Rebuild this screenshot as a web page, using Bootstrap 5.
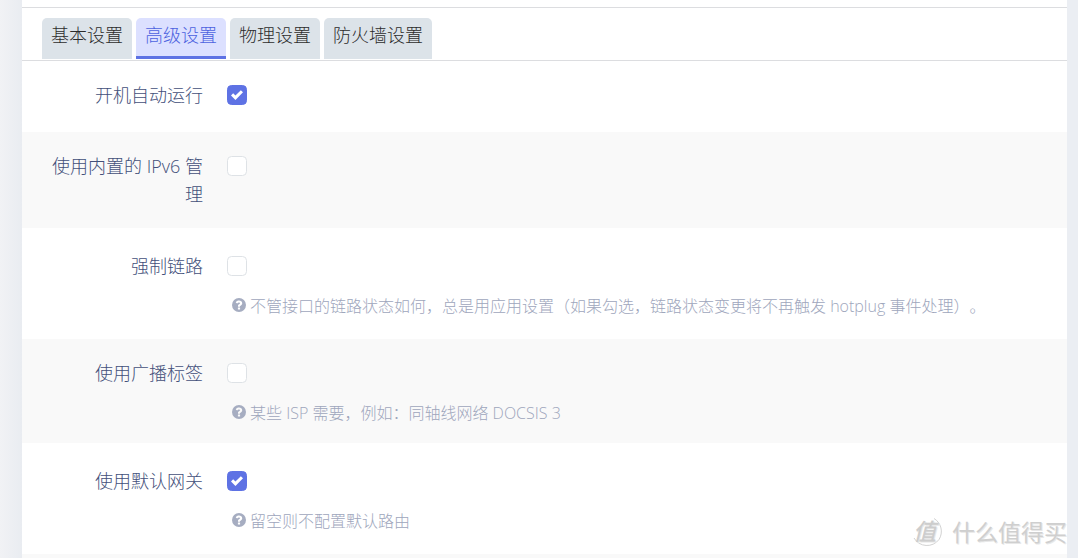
<!DOCTYPE html>
<html lang="zh-CN">
<head>
<meta charset="utf-8">
<meta name="viewport" content="width=device-width, initial-scale=1">
<title>接口 - 高级设置</title>
<link href="https://cdn.jsdelivr.net/npm/bootstrap@5.3.0/dist/css/bootstrap.min.css" rel="stylesheet">
<style>
  body {
    font-family: "Open Sans", "Noto Sans CJK SC", sans-serif;
    font-size: 18px; font-weight: 300; line-height: 28px; color: #43507a;
    text-spacing-trim: space-all;
    background: #ebeef3;
  }
  .page-wrap { padding: 0 11px 0 22px; background: linear-gradient(90deg, #f1f2f5, #e9ecf1 22px, #ebeef3 24px); }
  .panel { background: #fff; }
  .top-rule { height: 8px; border-bottom: 1px solid #dcdde0; }
  .tab-bar { padding: 10px 20px 1px; gap: 4px; border-bottom: 1px solid #dcdde0; }
  .tab-bar .nav-link {
    height: 41px; padding: 3px 9px 7px; color: #2c2c2c; background: #dce3e9;
    border: 0; border-bottom: 3px solid #dce3e9; border-radius: 5px 5px 0 0;
  }
  .tab-bar .nav-link.active { color: #4c62e0; background: #dce0ff; border-color: #5e72e4; }
  .option-row { padding: 24px 20px 23px; }
  .option-row:first-child { padding-top: 20px; }
  .option-row:nth-child(even) { padding-top: 20px; padding-bottom: 20px; background: #f9f9f9; }
  .option-label { width: 161px; margin-right: 24px; }
  .form-check-input {
    display: block; width: 20px; height: 20px; margin: 4px 0; border: 1px solid #dee2e6; border-radius: 5px;
  }
  .form-check-input:checked {
    background-color: #5e72e4; border-color: #5e72e4; background-size: 12px 12px;
    background-image: url("data:image/svg+xml,%3csvg xmlns='http://www.w3.org/2000/svg' viewBox='0 0 8 8'%3e%3cpath fill='%23fff' d='M6.564.75l-3.59 3.612-1.538-1.55L0 4.26l2.974 2.99L8 2.193z'/%3e%3c/svg%3e");
  }
  .help-text { margin: 20px 0 0 5px; gap: 4px; font-size: 16px; line-height: 20px; color: #9ea6bc; }
  .help-text svg { width: 14px; height: 14px; margin-top: 2px; fill: #a6adc1; }
  .brand-mark { right: 0; bottom: 10px; gap: 9px; font-size: 23px; line-height: 32px; color: #cfcfcf; font-weight: 400; text-shadow: 1px 1px 0 #e8e8e8; }
  .brand-mark svg { width: 32px; height: 32px; overflow: visible; font-family: "Noto Sans CJK SC", sans-serif; }
</style>
</head>
<body>
<div class="page-wrap min-vh-100 d-flex">
  <main class="panel flex-fill d-flex flex-column position-relative">
    <div class="top-rule"></div>
    <nav class="nav tab-bar">
      <a class="nav-link" href="#basic">基本设置</a>
      <a class="nav-link active" href="#advanced" aria-current="page">高级设置</a>
      <a class="nav-link" href="#physical">物理设置</a>
      <a class="nav-link" href="#firewall">防火墙设置</a>
    </nav>
    <form class="flex-fill d-flex flex-column">
      <div class="option-row d-flex">
        <label class="option-label flex-shrink-0 text-end" for="auto">开机自动运行</label>
        <div><input class="form-check-input" type="checkbox" id="auto" checked></div>
      </div>
      <div class="option-row d-flex">
        <label class="option-label flex-shrink-0 text-end" for="ipv6">使用内置的 IPv6 管理</label>
        <div><input class="form-check-input" type="checkbox" id="ipv6"></div>
      </div>
      <div class="option-row d-flex">
        <label class="option-label flex-shrink-0 text-end" for="force">强制链路</label>
        <div>
          <input class="form-check-input" type="checkbox" id="force">
          <div class="help-text d-flex">
            <svg class="flex-shrink-0" viewBox="0 0 14 14" aria-hidden="true"><use href="#help"/></svg>
            <span>不管接口的链路状态如何，总是用应用设置（如果勾选，链路状态变更将不再触发 hotplug 事件处理）。</span>
          </div>
        </div>
      </div>
      <div class="option-row d-flex">
        <label class="option-label flex-shrink-0 text-end" for="broadcast">使用广播标签</label>
        <div>
          <input class="form-check-input" type="checkbox" id="broadcast">
          <div class="help-text d-flex">
            <svg class="flex-shrink-0" viewBox="0 0 14 14" aria-hidden="true"><use href="#help"/></svg>
            <span>某些 ISP 需要，例如：同轴线网络 DOCSIS 3</span>
          </div>
        </div>
      </div>
      <div class="option-row d-flex">
        <label class="option-label flex-shrink-0 text-end" for="gateway">使用默认网关</label>
        <div>
          <input class="form-check-input" type="checkbox" id="gateway" checked>
          <div class="help-text d-flex">
            <svg class="flex-shrink-0" viewBox="0 0 14 14" aria-hidden="true"><use href="#help"/></svg>
            <span>留空则不配置默认路由</span>
          </div>
        </div>
      </div>
      <div class="option-row flex-fill p-0"></div>
    </form>
    <div class="brand-mark position-absolute d-flex text-nowrap">
      <svg viewBox="0 0 32 32" aria-hidden="true">
        <path d="M23 2.500a15 15 0 0 1 5 21A15 15 0 0 1 3 22" fill="none" stroke="#d2d2d2"/>
        <text x="2" y="24" font-size="23" font-weight="500" font-style="italic" fill="#cdcdcd">值</text>
      </svg>
      <span>什么值得买</span>
    </div>
  </main>
</div>
<svg class="d-none" aria-hidden="true">
  <symbol id="help" viewBox="0 0 14 14">
    <path fill-rule="evenodd" d="M7 0a7 7 0 1 1 0 14A7 7 0 0 1 7 0zM5.9 9.6v1.8h2.2V9.6zM3.7 4.4l1.5 1.2C5.8 4.9 6.200 4.500 6.900 4.500c.6 0 1.100.3 1.100.8 0 .4-.3.600-.9 1C6.400 6.700 6 7.100 6 8v.8h2V8.300c0-.3.200-.5.900-.9C9.700 6.900 10.200 6.300 10.200 5.300 10.200 3.700 8.700 2.600 7.100 2.600 5.500 2.600 4.500 3.200 3.700 4.400z"/>
  </symbol>
</svg>
<script src="https://cdn.jsdelivr.net/npm/bootstrap@5.3.0/dist/js/bootstrap.bundle.min.js"></script>
</body>
</html>
